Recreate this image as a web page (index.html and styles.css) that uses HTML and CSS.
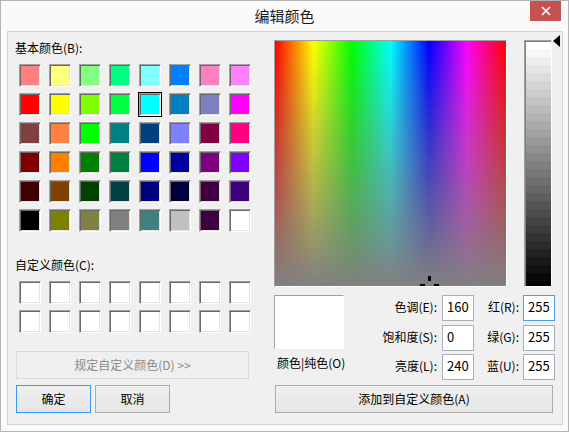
FILE: index.html
```html
<!DOCTYPE html>
<html lang="zh-CN">
<head>
<meta charset="utf-8">
<title>编辑颜色</title>
<link rel="stylesheet" href="styles.css">
</head>
<body>
<div class="win">
  <div class="titlebar">
    <span></span>
    <span class="title">编辑颜色</span>
    <div class="close">
      <svg width="10" height="10" viewBox="0 0 10 10"><path d="M1 1 L9 9 M9 1 L1 9" stroke="#fff" stroke-width="1.6" fill="none"/></svg>
    </div>
  </div>
  <div class="client">
    <div class="left">
      <div class="label">基本颜色(B):</div>
      <div class="grid basic">
        <div class="sw" style="background:#ff8080"></div>
        <div class="sw" style="background:#ffff80"></div>
        <div class="sw" style="background:#80ff80"></div>
        <div class="sw" style="background:#00ff80"></div>
        <div class="sw" style="background:#80ffff"></div>
        <div class="sw" style="background:#0080ff"></div>
        <div class="sw" style="background:#ff80c0"></div>
        <div class="sw" style="background:#ff80ff"></div>

        <div class="sw" style="background:#ff0000"></div>
        <div class="sw" style="background:#ffff00"></div>
        <div class="sw" style="background:#80ff00"></div>
        <div class="sw" style="background:#00ff40"></div>
        <div class="sw sel" style="background:#00ffff"></div>
        <div class="sw" style="background:#0080c0"></div>
        <div class="sw" style="background:#8080c0"></div>
        <div class="sw" style="background:#ff00ff"></div>

        <div class="sw" style="background:#804040"></div>
        <div class="sw" style="background:#ff8040"></div>
        <div class="sw" style="background:#00ff00"></div>
        <div class="sw" style="background:#008080"></div>
        <div class="sw" style="background:#004080"></div>
        <div class="sw" style="background:#8080ff"></div>
        <div class="sw" style="background:#800040"></div>
        <div class="sw" style="background:#ff0080"></div>

        <div class="sw" style="background:#800000"></div>
        <div class="sw" style="background:#ff8000"></div>
        <div class="sw" style="background:#008000"></div>
        <div class="sw" style="background:#008040"></div>
        <div class="sw" style="background:#0000ff"></div>
        <div class="sw" style="background:#0000a0"></div>
        <div class="sw" style="background:#800080"></div>
        <div class="sw" style="background:#8000ff"></div>

        <div class="sw" style="background:#400000"></div>
        <div class="sw" style="background:#804000"></div>
        <div class="sw" style="background:#004000"></div>
        <div class="sw" style="background:#004040"></div>
        <div class="sw" style="background:#000080"></div>
        <div class="sw" style="background:#000040"></div>
        <div class="sw" style="background:#400040"></div>
        <div class="sw" style="background:#400080"></div>

        <div class="sw" style="background:#000000"></div>
        <div class="sw" style="background:#808000"></div>
        <div class="sw" style="background:#808040"></div>
        <div class="sw" style="background:#808080"></div>
        <div class="sw" style="background:#408080"></div>
        <div class="sw" style="background:#c0c0c0"></div>
        <div class="sw" style="background:#400040"></div>
        <div class="sw" style="background:#ffffff"></div>
      </div>

      <div class="label custom-label">自定义颜色(C):</div>
      <div class="grid custom">
        <div class="sw"></div><div class="sw"></div><div class="sw"></div><div class="sw"></div>
        <div class="sw"></div><div class="sw"></div><div class="sw"></div><div class="sw"></div>
        <div class="sw"></div><div class="sw"></div><div class="sw"></div><div class="sw"></div>
        <div class="sw"></div><div class="sw"></div><div class="sw"></div><div class="sw"></div>
      </div>

      <div class="btn disabled define">规定自定义颜色(D) &gt;&gt;</div>
      <div class="btnrow">
        <div class="btn default">确定</div>
        <div class="btn">取消</div>
      </div>
    </div>

    <div class="right">
      <div class="pickrow">
        <div class="spectrum">
          <div class="cross cv"></div>
          <div class="cross chl"></div>
          <div class="cross chr"></div>
        </div>
        <div class="lumwrap">
          <div class="lum"></div>
          <div class="arrow"></div>
        </div>
      </div>
      <div class="bottomrow">
        <div class="previewcol">
          <div class="preview"></div>
          <div class="plabel">颜色|纯色(O)</div>
        </div>
        <div class="fields">
          <div class="flabel">色调(E):</div>
          <div class="edit">160</div>
          <div class="flabel f2">红(R):</div>
          <div class="edit focus">255</div>

          <div class="flabel">饱和度(S):</div>
          <div class="edit">0</div>
          <div class="flabel f2">绿(G):</div>
          <div class="edit">255</div>

          <div class="flabel">亮度(L):</div>
          <div class="edit">240</div>
          <div class="flabel f2">蓝(U):</div>
          <div class="edit">255</div>
        </div>
      </div>
      <div class="btn add">添加到自定义颜色(A)</div>
    </div>
  </div>
</div>
</body>
</html>
```

FILE: styles.css
```css
html, body {
  margin: 0;
  padding: 0;
  background: #ffffff;
}
body {
  font-family: "Noto Sans CJK SC", "Noto Sans", sans-serif;
  font-size: 12px;
  color: #000;
}
.win {
  width: 569px;
  height: 432px;
  box-sizing: border-box;
  border: 1px solid #b4b4b4;
  background: #fafafa;
}
.titlebar {
  height: 30px;
  display: grid;
  grid-template-columns: 1fr auto 1fr;
  align-items: start;
}
.title {
  font-size: 15px;
  line-height: 30px;
  color: #1a1a1a;
}
.close {
  justify-self: end;
  width: 31px;
  height: 20px;
  margin-right: 7px;
  background: #c75050;
  display: flex;
  align-items: center;
  justify-content: center;
}
.client {
  margin: 0 5px 0 6px;
  width: 556px;
  height: 394px;
  box-sizing: border-box;
  border: 1px solid #d2d2d2;
  background: #f0f0f0;
  display: flex;
  gap: 23px;
  padding: 8px 0 0 7px;
}
.left {
  width: 236px;
  display: flex;
  flex-direction: column;
}
.label {
  line-height: 16px;
  height: 16px;
}
.grid {
  display: grid;
  grid-template-columns: repeat(8, 22px);
  grid-auto-rows: 23px;
  column-gap: 8px;
  row-gap: 6px;
  margin-left: 4px;
}
.basic { margin-top: 8px; }
.custom-label { margin-top: 25px; }
.custom { margin-top: 8px; }
.sw {
  box-sizing: border-box;
  border: 1px solid;
  border-color: #a0a0a0 #ffffff #ffffff #a0a0a0;
  box-shadow: inset 1px 1px 0 #696969, inset -1px -1px 0 #e3e3e3;
  background: #ffffff;
}
.sel {
  outline: 1px solid #000;
  outline-offset: 0;
}
.btn {
  box-sizing: border-box;
  height: 28px;
  border: 1px solid #acacac;
  background: linear-gradient(#f0f0f0, #e5e5e5);
  display: flex;
  align-items: center;
  justify-content: center;
  line-height: 16px;
}
.disabled {
  border-color: #d9d9d9;
  background: #efefef;
  color: #8a8a8a;
}
.define {
  margin-top: 18px;
  margin-left: 1px;
  width: 233px;
}
.btnrow {
  display: flex;
  gap: 4px;
  margin-top: 6px;
  margin-left: 1px;
}
.btnrow .btn { width: 75px; }
.default { border-color: #3399ff; }

.right {
  width: 288px;
  display: flex;
  flex-direction: column;
}
.pickrow {
  display: flex;
  gap: 17px;
  height: 247px;
}
.spectrum {
  position: relative;
  overflow: hidden;
  width: 233px;
  height: 247px;
  box-sizing: border-box;
  border: 1px solid;
  border-color: #a0a0a0 #ffffff #ffffff #a0a0a0;
  background:
    linear-gradient(to bottom, rgba(128,128,128,0), #808080),
    linear-gradient(to right, #ff0000, #ffff00, #00ff00, #00ffff, #0000ff, #ff00ff, #ff0000);
}
.cross {
  position: absolute;
  background: #000;
}
.cv { left: 153px; top: 235px; width: 3px; height: 5px; }
.chl { left: 145px; top: 243px; width: 5px; height: 3px; }
.chr { left: 159px; top: 243px; width: 5px; height: 3px; }
.lumwrap {
  position: relative;
  width: 28px;
  height: 247px;
}
.lum {
  width: 28px;
  height: 247px;
  box-sizing: border-box;
  border: 1px solid;
  border-color: #a0a0a0 #ffffff #ffffff #a0a0a0;
  box-shadow: inset 1px 1px 0 #808080;
  background: linear-gradient(to bottom,
    #ffffff 0 8px, #f7f7f7 8px 16px, #eeeeee 16px 24px, #e6e6e6 24px 32px,
    #dddddd 32px 40px, #d5d5d5 40px 48px, #cccccc 48px 56px, #c4c4c4 56px 64px,
    #bbbbbb 64px 72px, #b3b3b3 72px 80px, #aaaaaa 80px 88px, #a2a2a2 88px 96px,
    #999999 96px 104px, #919191 104px 112px, #888888 112px 120px, #808080 120px 128px,
    #777777 128px 136px, #6f6f6f 136px 144px, #666666 144px 152px, #5e5e5e 152px 160px,
    #555555 160px 168px, #4d4d4d 168px 176px, #444444 176px 184px, #3c3c3c 184px 192px,
    #333333 192px 200px, #2b2b2b 200px 208px, #222222 208px 216px, #1a1a1a 216px 224px,
    #111111 224px 232px, #090909 232px 240px, #000000 240px 247px);
}
.arrow {
  position: absolute;
  left: 29px;
  top: -5px;
  width: 0;
  height: 0;
  border-top: 6px solid transparent;
  border-bottom: 6px solid transparent;
  border-right: 7px solid #000;
}
.bottomrow {
  display: flex;
  margin-top: 8px;
}
.previewcol {
  width: 70px;
  display: flex;
  flex-direction: column;
}
.preview {
  width: 70px;
  height: 54px;
  box-sizing: border-box;
  border: 1px solid;
  border-color: #a0a0a0 #ffffff #ffffff #a0a0a0;
  background: #ffffff;
}
.plabel {
  margin-top: 6px;
  padding-left: 3px;
  line-height: 16px;
  white-space: nowrap;
}
.fields {
  display: grid;
  grid-template-columns: 98px 32px 49px 32px;
  grid-template-rows: 26px 26px 26px;
  row-gap: 3.5px;
}
.flabel {
  text-align: right;
  padding-right: 5px;
  line-height: 24px;
  white-space: nowrap;
}
.f2 { padding-right: 4px; }
.edit {
  box-sizing: border-box;
  border: 1px solid #abadb3;
  background: #ffffff;
  padding: 1px 0 0 4px;
  font-size: 13px;
  line-height: 20px;
}
.edit.focus { border-color: #569de5; }
.add {
  margin-top: 5px;
  margin-left: 1px;
  width: 278px;
}
```
